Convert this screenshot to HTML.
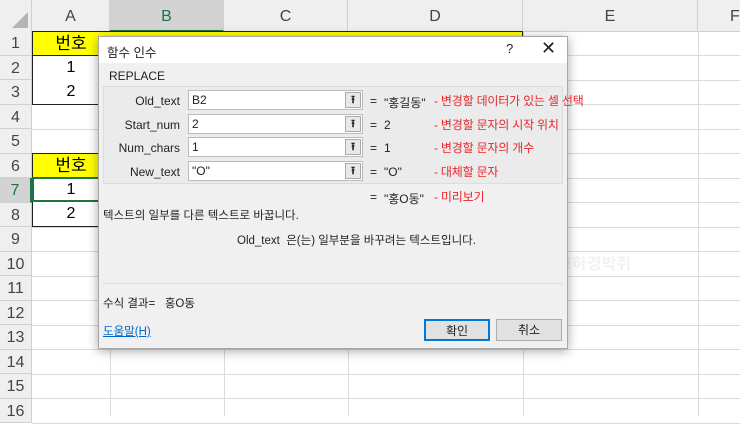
<!DOCTYPE html>
<html><head><meta charset="utf-8"><style>
*{margin:0;padding:0;box-sizing:border-box}
body{width:740px;height:416px;overflow:hidden;background:#fff;font-family:"Liberation Sans","Noto Sans CJK KR",sans-serif;position:relative}
.a{position:absolute;white-space:nowrap}
.hd{background:#efefef;color:#444;font-size:16px;text-align:center;border-right:1px solid #d0d0d0;border-bottom:1px solid #d0d0d0}
.vl{position:absolute;top:31px;bottom:0;width:1px;background:#dadada}
.hl{position:absolute;left:32px;right:0;height:1px;background:#dadada}
.dlg{position:absolute;left:98px;top:36px;width:470px;height:313px;background:#f0f0f0;border:1px solid #a8a8a8;box-shadow:0 2px 10px rgba(0,0,0,.35);font-size:12px;color:#222}
.lbl{position:absolute;width:76px;text-align:right;left:5px;font-size:12px}
.inp{position:absolute;left:89px;width:175px;height:20px;background:#fff;border:1px solid #bbb;font-size:12px;padding:2px 0 0 3px}
.ib{position:absolute;right:1px;top:1px;width:16px;height:16px;background:#e8e8e8;border:1px solid #aaa;font-size:11px;text-align:center;line-height:14px;font-weight:bold}
.eq{position:absolute;left:271px;font-size:12px}
.vv{position:absolute;left:285px;font-size:12px;white-space:nowrap}
.red{position:absolute;left:335px;color:#e8262c;font-size:12px;white-space:nowrap;letter-spacing:-0.2px}
.btn{position:absolute;top:282px;width:66px;height:22px;background:#e1e1e1;border:1px solid #adadad;text-align:center;line-height:20px;font-size:12px}
</style></head><body>
<div class="a hd" style="left:0;top:0;width:32px;height:32px;background:#efefef"></div>
<div class="a" style="left:12px;top:12px;width:0;height:0;border-left:16px solid transparent;border-bottom:16px solid #b4b4b4"></div>
<div class="a hd" style="left:32px;top:0;width:78px;height:32px;line-height:34px">A</div>
<div class="a hd" style="left:110px;top:0;width:114px;height:32px;line-height:34px;background:#d3d3d3;color:#217346;border-bottom:2px solid #217346">B</div>
<div class="a hd" style="left:224px;top:0;width:124px;height:32px;line-height:34px">C</div>
<div class="a hd" style="left:348px;top:0;width:175px;height:32px;line-height:34px">D</div>
<div class="a hd" style="left:523px;top:0;width:175px;height:32px;line-height:34px">E</div>
<div class="a hd" style="left:698px;top:0;width:50px;height:32px;line-height:34px;text-align:left;padding-left:32px">F</div>
<div id="rows"></div>
<div class="vl" style="left:110px"></div><div class="vl" style="left:224px"></div><div class="vl" style="left:348px"></div><div class="vl" style="left:523px"></div><div class="vl" style="left:698px"></div>
<script>
var s='';for(var i=1;i<=16;i++){var t=31+(i-1)*24.5;s+='<div class="a hd" style="left:0;top:'+t+'px;width:32px;height:24.5px;line-height:25px;'+(i==7?'background:#d3d3d3;color:#217346;border-right:2px solid #217346':'')+'">'+i+'</div><div class="hl" style="top:'+(t+24)+'px"></div>';}
document.getElementById('rows').innerHTML=s;
</script>
<div class="a" style="left:32px;top:31px;width:491px;height:25px;background:#ffff00;border:1px solid #222"></div>
<div class="a" style="left:32px;top:31px;width:78px;height:25px;font-size:17px;text-align:center;line-height:25px">번호</div>
<div class="a" style="left:32px;top:55px;width:78px;height:50px;border:1px solid #222;background:#fff;font-size:16px;text-align:center;line-height:24px">1<br>2</div>
<div class="a" style="left:32px;top:153px;width:78px;height:25px;background:#ffff00;border:1px solid #222;font-size:17px;text-align:center;line-height:24px">번호</div>
<div class="a" style="left:32px;top:177px;width:78px;height:50px;border:1px solid #222;background:#fff;font-size:16px;text-align:center;line-height:24px">1<br>2</div>
<div class="a" style="left:32px;top:177px;width:78px;height:25px;border:2px solid #217346"></div>
<div class="a" style="left:480px;top:245px;width:40px;height:40px;border-radius:50%;background:#f7f7f7"></div>
<div class="a" style="left:528px;top:250px;color:#f2f2f2;font-size:16px;font-weight:bold">블로그하경박쥐</div>
<div class="dlg">
<div class="a" style="left:0;top:0;width:468px;height:26px;background:#fff"></div>
<div class="a" style="left:8px;top:5px;font-size:12.5px">함수 인수</div>
<div class="a" style="left:407px;top:4px;font-size:13px">?</div>
<div class="a" style="left:442px;top:1px;font-size:18px">✕</div>
<div class="a" style="left:10px;top:32px;font-size:12px">REPLACE</div>
<div class="a" style="left:4px;top:49px;width:460px;height:98px;border:1px solid #dcdcdc;background:#ebebeb"></div>
<div class="lbl" style="top:57px">Old_text</div><div class="inp" style="top:53px">B2<div class="ib">⭱</div></div><div class="eq" style="top:57px">=</div><div class="vv" style="top:57px">"홍길동"</div><div class="red" style="top:55px">- 변경할 데이터가 있는 셀 선택</div>
<div class="lbl" style="top:81px">Start_num</div><div class="inp" style="top:77px">2<div class="ib">⭱</div></div><div class="eq" style="top:81px">=</div><div class="vv" style="top:81px">2</div><div class="red" style="top:79px">- 변경할 문자의 시작 위치</div>
<div class="lbl" style="top:104px">Num_chars</div><div class="inp" style="top:100px">1<div class="ib">⭱</div></div><div class="eq" style="top:104px">=</div><div class="vv" style="top:104px">1</div><div class="red" style="top:102px">- 변경할 문자의 개수</div>
<div class="lbl" style="top:128px">New_text</div><div class="inp" style="top:124px">"O"<div class="ib">⭱</div></div><div class="eq" style="top:128px">=</div><div class="vv" style="top:128px">"O"</div><div class="red" style="top:126px">- 대체할 문자</div>
<div class="eq" style="top:153px">=</div><div class="vv" style="top:153px">"홍O동"</div><div class="red" style="top:151px">- 미리보기</div>
<div class="a" style="left:4px;top:170px;font-size:11.5px">텍스트의 일부를 다른 텍스트로 바꿉니다.</div>
<div class="a" style="left:138px;top:195px;font-size:11.5px">Old_text &nbsp;은(는) 일부분을 바꾸려는 텍스트입니다.</div>
<div class="a" style="left:4px;top:246px;width:460px;height:1px;background:#dcdcdc"></div>
<div class="a" style="left:4px;top:258px;font-size:11.5px">수식 결과= &nbsp; 홍O동</div>
<div class="a" style="left:4px;top:286px;font-size:11.5px;color:#0066cc;text-decoration:underline">도움말(H)</div>
<div class="btn" style="left:325px;border:2px solid #0078d7">확인</div>
<div class="btn" style="left:397px">취소</div>
</div>
</body></html>
